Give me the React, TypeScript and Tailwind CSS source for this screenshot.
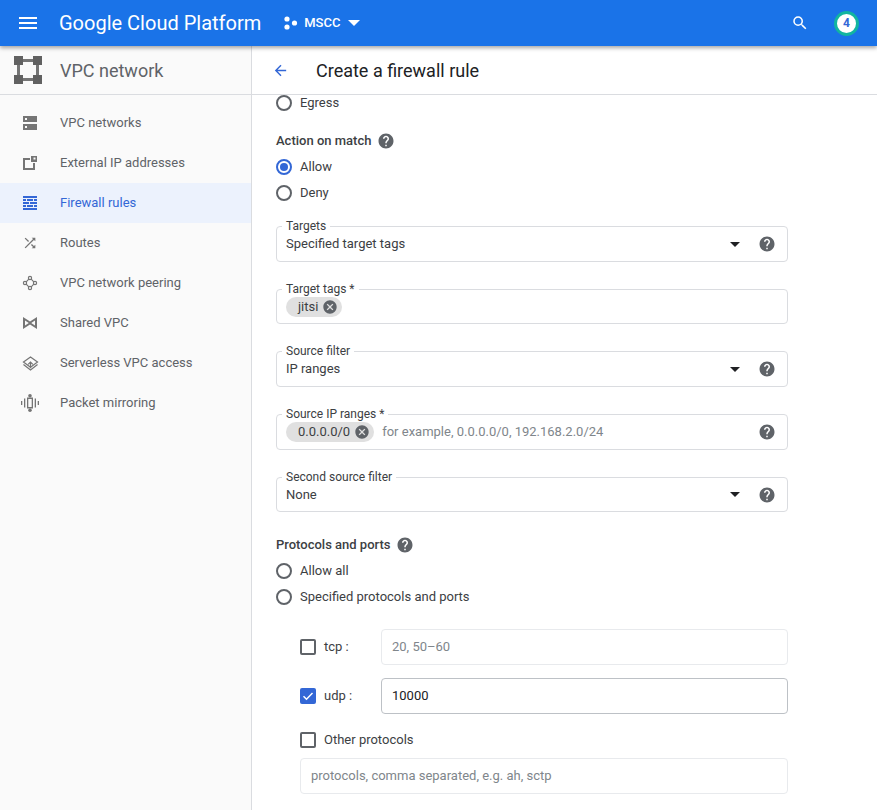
import React from 'react';

const HELP = 'M12 2C6.48 2 2 6.48 2 12s4.48 10 10 10 10-4.48 10-10S17.52 2 12 2zm1 17h-2v-2h2v2zm2.07-7.75l-.9.92C13.45 12.9 13 13.5 13 15h-2v-.5c0-1.1.45-2.1 1.17-2.83l1.24-1.26c.37-.36.59-.86.59-1.41 0-1.1-.9-2-2-2s-2 .9-2 2H8c0-2.21 1.79-4 4-4s4 1.79 4 4c0 .88-.36 1.68-.93 2.25z';
const CANCEL = 'M12 2C6.47 2 2 6.47 2 12s4.47 10 10 10 10-4.47 10-10S17.53 2 12 2zm5 13.59L15.59 17 12 13.41 8.41 17 7 15.59 10.59 12 7 8.41 8.41 7 12 10.59 15.59 7 17 8.41 13.41 12 17 15.59z';

function Help({ className = '' }: { className?: string }) {
  return (
    <svg viewBox="0 0 24 24" className={`w-[18px] h-[18px] fill-[#5f6368] shrink-0 ${className}`}>
      <path d={HELP} />
    </svg>
  );
}

function Caret() {
  return <span className="w-0 h-0 border-x-[5px] border-x-transparent border-t-[5px] border-t-[#202124] shrink-0" />;
}

function Radio({ label, checked = false }: { label: string; checked?: boolean }) {
  return (
    <div className="flex items-center h-[26px]">
      <span className={`w-4 h-4 rounded-full border-2 flex items-center justify-center ${checked ? 'border-[#3367d6]' : 'border-[#5f6368]'}`}>
        {checked && <span className="w-2 h-2 rounded-full bg-[#3367d6]" />}
      </span>
      <span className="ml-2 text-[13px] text-[#3c4043]">{label}</span>
    </div>
  );
}

function Checkbox({ checked = false }: { checked?: boolean }) {
  if (checked) {
    return (
      <span className="w-4 h-4 rounded-[2px] bg-[#3367d6] flex items-center justify-center shrink-0">
        <svg viewBox="0 0 16 16" className="w-4 h-4 fill-none stroke-white stroke-[1.5]">
          <path d="M3.5 8.2l3 3 6-6.2" />
        </svg>
      </span>
    );
  }
  return <span className="w-4 h-4 rounded-[2px] border-2 border-[#5f6368] shrink-0" />;
}

function Chip({ label, wide = false }: { label: string; wide?: boolean }) {
  return (
    <span className={`h-5 rounded-full bg-[#e0e0e0] flex items-center pl-3 pr-1 text-[13px] text-[#3c4043] shrink-0 ${wide ? '' : ''}`}>
      {label}
      <svg viewBox="0 0 24 24" className="w-4 h-4 ml-1 fill-[#5f6368]">
        <path d={CANCEL} />
      </svg>
    </span>
  );
}

function Field({ label, h = 'h-9', children, mt }: { label: string; h?: string; children: React.ReactNode; mt: string }) {
  return (
    <div className={`relative ${h} ${mt} w-[512px] rounded-[4px] border border-[#dadce0] flex items-center pl-[9px] pr-[11px]`}>
      <span className="absolute left-[5px] -top-[9px] px-1 bg-white text-xs leading-4 text-[#3c4043]">{label}</span>
      {children}
    </div>
  );
}

const navIcons: Record<string, React.ReactNode> = {
  networks: (
    <svg viewBox="0 0 14 14" className="w-[14px] h-[14px] fill-[#757575]">
      <path fillRule="evenodd" d="M0 0h14v6H0zM2 2v2h2V2zM0 8h14v6H0zM2 10v2h2v-2z" />
    </svg>
  ),
  external: (
    <svg viewBox="0 0 14 14" className="w-[14px] h-[14px] fill-[#757575]">
      <path d="M0 2h7v2H2v8h8V7h2v7H0z" />
      <path fillRule="evenodd" d="M8 0h6v6H8zM10.5 1.5v2h2v-2z" />
    </svg>
  ),
  firewall: (
    <svg viewBox="0 0 14 14" className="w-[14px] h-[14px] fill-[#3367d6]">
      <path d="M0 0h14v2H0zM0 3h3v2H0zM4 3h6v2H4zM11 3h3v2h-3zM0 6h6v2H0zM7 6h7v2H7zM0 9h3v2H0zM4 9h6v2H4zM11 9h3v2h-3zM0 12h14v2H0z" />
    </svg>
  ),
  routes: (
    <svg viewBox="0 0 24 24" className="w-4 h-4 fill-[#757575]">
      <path d="M10.59 9.17L5.41 4 4 5.41l5.17 5.17 1.42-1.41zM14.5 4l2.04 2.04L4 18.59 5.41 20 17.96 7.46 20 9.5V4h-5.5zm.33 9.41l-1.41 1.41 3.13 3.13L14.5 20H20v-5.5l-2.04 2.04-3.13-3.13z" />
    </svg>
  ),
  peering: (
    <svg viewBox="0 0 16 16" className="w-4 h-4 fill-none stroke-[#757575] stroke-[1.2]">
      <circle cx="8" cy="3" r="1.6" />
      <circle cx="8" cy="13" r="1.6" />
      <circle cx="3" cy="8" r="1.6" />
      <circle cx="13" cy="8" r="1.6" />
      <path d="M4.2 6.8l2.6-2.6M9.2 4.2l2.6 2.6M11.8 9.2l-2.6 2.6M6.8 11.8L4.2 9.2" />
    </svg>
  ),
  shared: (
    <svg viewBox="0 0 14 12" className="w-[14px] h-3 fill-[#757575]">
      <path fillRule="evenodd" d="M0 0l7 4.5L14 0v12L7 7.5 0 12zM2 3.5v5L5.8 6zM12 3.5L8.2 6 12 8.5z" />
    </svg>
  ),
  serverless: (
    <svg viewBox="0 0 18 16" className="w-[17px] h-[15px] fill-none stroke-[#757575] stroke-[1.3]">
      <path d="M9 1l7.5 5.5L9 12 1.5 6.5z" />
      <path d="M1.5 9L9 15l7.5-6" />
      <path d="M9 13V7M6.5 9L9 6.5 11.500 9" />
    </svg>
  ),
  mirroring: (
    <svg viewBox="0 0 18 18" className="w-[18px] h-[18px] fill-[#757575]">
      <path d="M0 7h1.300v4H0zM16.700 7H18v4h-1.300zM3 4.500h1.300v9H3zM13.700 4.500H15v9h-1.300z" />
      <path fillRule="evenodd" d="M6 3.500h6v11H6zM7.300 5v8h3.400V5z" />
      <circle cx="9" cy="1.800" r="1.800" />
      <circle cx="9" cy="16.200" r="1.800" />
    </svg>
  ),
};

const navItems = [
  { key: 'networks', label: 'VPC networks' },
  { key: 'external', label: 'External IP addresses' },
  { key: 'firewall', label: 'Firewall rules', active: true },
  { key: 'routes', label: 'Routes' },
  { key: 'peering', label: 'VPC network peering' },
  { key: 'shared', label: 'Shared VPC' },
  { key: 'serverless', label: 'Serverless VPC access' },
  { key: 'mirroring', label: 'Packet mirroring' },
];

export default function App() {
  return (
    <div className="w-[877px] h-[810px] overflow-hidden bg-white flex flex-col font-['Roboto',sans-serif]">
      <header className="relative z-10 h-[46px] shrink-0 bg-[#1a73e8] shadow-[0_2px_4px_rgba(0,0,0,0.35)] flex items-center text-white">
        <svg viewBox="0 0 18 12" className="ml-[19px] w-[18px] h-3 fill-white">
          <path d="M0 0h18v2H0zM0 5h18v2H0zM0 10h18v2H0z" />
        </svg>
        <span className="ml-[22px] text-[20px] leading-none whitespace-nowrap">Google Cloud Platform</span>
        <svg viewBox="0 0 14 14" className="ml-[23px] w-[14px] h-[14px] fill-white">
          <circle cx="3" cy="3" r="2.600" />
          <circle cx="3" cy="11" r="2.600" />
          <circle cx="10.500" cy="7" r="2.600" />
        </svg>
        <span className="ml-[6px] text-[13px] font-medium">MSCC</span>
        <span className="ml-[8px] w-0 h-0 border-x-[6px] border-x-transparent border-t-[6px] border-t-white" />
        <svg viewBox="0 0 24 24" className="ml-auto w-[18px] h-[18px] fill-white">
          <path d="M15.500 14h-.79l-.28-.27A6.471 6.471 0 0016 9.500 6.500 6.500 0 109.500 16c1.610 0 3.090-.59 4.230-1.570l.27.28v.79l5 4.990L20.490 19l-4.990-5zm-6 0C7.010 14 5 11.990 5 9.500S7.010 5 9.500 5 14 7.010 14 9.500 11.990 14 9.500 14z" />
        </svg>
        <span className="ml-[25px] mr-[18px] w-[25px] h-[25px] rounded-full bg-white border-[3px] border-[#12b5a0] flex items-center justify-center text-xs font-bold text-[#3367d6]">4</span>
      </header>

      <div className="flex flex-1 min-h-0">
        <aside className="w-[252px] shrink-0 bg-[#fafafa] border-r border-[#dadce0] flex flex-col">
          <div className="h-[49px] shrink-0 border-b border-[#dadce0] flex items-center pl-[14px]">
            <svg viewBox="0 0 28 28" className="w-7 h-7 fill-[#616161]">
              <path d="M0 0h9v9H0zM19 0h9v9h-9zM0 19h9v9H0zM19 19h9v9h-9z" />
              <path fill="#757575" d="M9 3h10v3H9zM9 22h10v3H9zM3 9h3v10H3zM22 9h3v10h-3z" />
            </svg>
            <span className="ml-[18px] text-[18px] text-[#5f6368]">VPC network</span>
          </div>
          <nav className="pt-2">
            {navItems.map((item) => (
              <div key={item.key} className={`h-10 flex items-center ${item.active ? 'bg-[#e8f0fe]/80 text-[#3367d6]' : 'text-[#5f6368]'}`}>
                <span className="w-[56px] pl-4 pr-3 flex items-center justify-center shrink-0">{navIcons[item.key]}</span>
                <span className="ml-1 text-[13px]">{item.label}</span>
              </div>
            ))}
          </nav>
        </aside>

        <main className="flex-1 min-w-0 flex flex-col">
          <div className="h-[49px] shrink-0 border-b border-[#dadce0] flex items-center pl-5">
            <svg viewBox="0 0 24 24" className="w-[17px] h-[17px] fill-[#3367d6]">
              <path d="M20 11H7.830l5.590-5.590L12 4l-8 8 8 8 1.410-1.410L7.830 13H20v-2z" />
            </svg>
            <span className="ml-[27px] text-[18px] text-[#202124]">Create a firewall rule</span>
          </div>

          <div className="pl-6 flex flex-col">
            <div className="-mt-[5px]">
              <Radio label="Egress" />
            </div>
            <div className="mt-[12px] h-[26px] flex items-center gap-[6px] text-[13px] font-medium text-[#3c4043]">
              Action on match <Help className="w-4 h-4" />
            </div>
            <Radio label="Allow" checked />
            <Radio label="Deny" />

            <Field label="Targets" mt="mt-[20px]">
              <span className="text-[13px] text-[#3c4043]">Specified target tags</span>
              <span className="ml-auto mr-[18px] flex"><Caret /></span>
              <Help />
            </Field>
            <Field label="Target tags *" mt="mt-[27px]" h="h-[35px]">
              <Chip label="jitsi" />
            </Field>
            <Field label="Source filter" mt="mt-[27px]">
              <span className="text-[13px] text-[#3c4043]">IP ranges</span>
              <span className="ml-auto mr-[18px] flex"><Caret /></span>
              <Help />
            </Field>
            <Field label="Source IP ranges *" mt="mt-[27px]">
              <Chip label="0.0.0.0/0" />
              <span className="ml-2 text-[13px] text-[#80868b]">for example, 0.0.0.0/0, 192.168.2.0/24</span>
              <span className="ml-auto flex"><Help /></span>
            </Field>
            <Field label="Second source filter" mt="mt-[27px]" h="h-[35px]">
              <span className="text-[13px] text-[#3c4043]">None</span>
              <span className="ml-auto mr-[18px] flex"><Caret /></span>
              <Help />
            </Field>

            <div className="mt-[20px] h-[26px] flex items-center gap-[6px] text-[13px] font-medium text-[#3c4043]">
              Protocols and ports <Help className="w-4 h-4" />
            </div>
            <Radio label="Allow all" />
            <Radio label="Specified protocols and ports" />

            <div className="ml-6 mt-[19px] w-[488px] flex flex-col">
              <div className="flex items-center h-9">
                <Checkbox />
                <span className="ml-2 w-[57px] text-[13px] text-[#3c4043]">tcp :</span>
                <div className="flex-1 h-9 rounded-[4px] border border-[#e8eaed] flex items-center pl-[10px] text-[13px] text-[#80868b]">20, 50–60</div>
              </div>
              <div className="flex items-center h-9 mt-[13px]">
                <Checkbox checked />
                <span className="ml-2 w-[57px] text-[13px] text-[#3c4043]">udp :</span>
                <div className="flex-1 h-9 rounded-[4px] border border-[#bdc1c6] flex items-center pl-[10px] text-[13px] text-[#202124]">10000</div>
              </div>
              <div className="flex items-center mt-[18px] h-4">
                <Checkbox />
                <span className="ml-2 text-[13px] text-[#3c4043]">Other protocols</span>
              </div>
              <div className="mt-[10px] h-9 rounded-[4px] border border-[#e8eaed] flex items-center pl-[10px] text-[13px] text-[#80868b]">protocols, comma separated, e.g. ah, sctp</div>
            </div>
          </div>
        </main>
      </div>
    </div>
  );
}
